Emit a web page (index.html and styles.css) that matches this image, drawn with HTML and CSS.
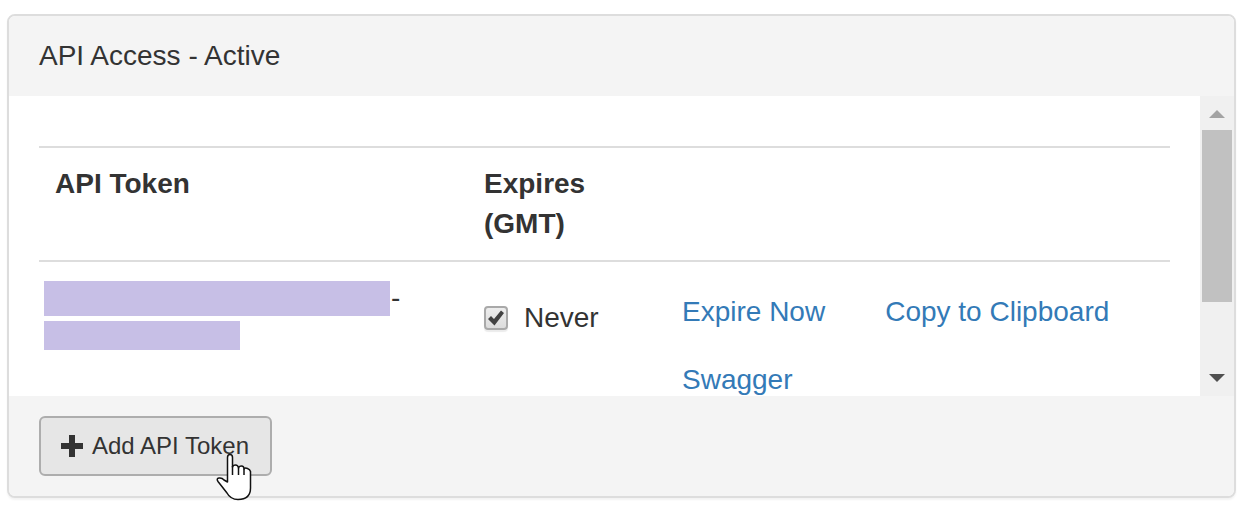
FILE: index.html
```html
<!DOCTYPE html>
<html lang="en">
<head>
<meta charset="utf-8">
<title>API Access</title>
<link rel="stylesheet" href="styles.css">
</head>
<body>
<section class="panel">
  <header class="panel-heading">API Access - Active</header>
  <div class="panel-body">
    <div class="scroll-content">
      <table class="tokens">
        <colgroup><col class="col-token"><col class="col-expires"><col></colgroup>
        <thead>
          <tr><th scope="col">API Token</th><th scope="col">Expires (GMT)</th><th></th></tr>
        </thead>
        <tbody>
          <tr>
            <td class="token">
              <div class="token-line"><span class="redacted redacted-long"></span>-</div>
              <div class="redacted redacted-short"></div>
            </td>
            <td>
              <label class="never"><input type="checkbox" class="check" checked>
                <svg class="tick" viewBox="0 0 24 24" aria-hidden="true"><path d="M4 13 7 10 10 13 17 4.500 20 7 10.500 19.500Z"/></svg>
                <span>Never</span></label>
            </td>
            <td>
              <div class="actions">
                <a href="#expire">Expire Now</a>
                <a href="#copy">Copy to Clipboard</a>
                <a href="#swagger">Swagger</a>
              </div>
            </td>
          </tr>
        </tbody>
      </table>
    </div>
    <div class="scrollbar">
      <button type="button" class="arrow arrow-up" aria-label="Scroll up"><svg viewBox="0 0 16 8"><path d="M8 0 16 8H0z"/></svg></button>
      <div class="track"><div class="thumb"></div></div>
      <button type="button" class="arrow arrow-down" aria-label="Scroll down"><svg viewBox="0 0 16 8"><path d="M0 0H16L8 8z"/></svg></button>
    </div>
  </div>
  <footer class="panel-footer">
    <button type="button" class="add">
      <svg class="plus" viewBox="0 0 22 22" aria-hidden="true"><path d="M8 0h6v8h8v6h-8v8H8v-8H0V8h8z"/></svg>
      Add API Token
      <svg class="pointer" viewBox="0 0 36 48" aria-hidden="true"><path d="M11.500 29V4.500Q11.500 1.500 14 1.500T16.500 4.500V14Q17 12 19.500 12T22.500 15Q23 13 25.500 13T28 16Q29 14.500 31.500 15.500T34.500 18.500V35Q34.500 46.500 22 46.500Q14.500 46.500 11 40L2 28.500Q0 25.500 3 25Q6 24.500 8 27Z"/><path d="M16.500 13V22M22.500 15V22M28 16V22"/></svg>
    </button>
  </footer>
</section>
</body>
</html>
```
FILE: styles.css
```css
* { box-sizing: border-box; }
body {
  margin: 0;
  padding: 14px 20px 12px 7px;
  background: #fff;
  color: #333;
  font: 28px/40px "Liberation Sans", Arial, sans-serif;
}
.panel {
  border: 2px solid #ddd;
  border-radius: 8px;
  background: #fff;
  box-shadow: 0 2px 2px rgba(0, 0, 0, .05);
}
.panel-heading {
  padding: 20px 30px;
  background: #f4f4f4;
  border-radius: 6px 6px 0 0;
}
.panel-body { display: flex; height: 300px; }
.scroll-content {
  flex: 1;
  padding: 50px 30px 0;
  overflow: hidden;
}
.tokens {
  width: 100%;
  table-layout: fixed;
  border-spacing: 0;
}
.col-token { width: 429px; }
.col-expires { width: 198px; }
.tokens th, .tokens td {
  padding: 16px;
  border-top: 2px solid #ddd;
  text-align: left;
  vertical-align: top;
}
.tokens th:nth-child(2) { padding-right: 60px; }
.tokens .token { padding: 19px 0 16px 5px; }
.token-line {
  display: flex;
  gap: 1px;
  height: 40px;
  line-height: 34px;
}
.redacted { background: #c7bfe6; }
.redacted-long { width: 346px; height: 35px; }
.redacted-short { width: 196px; height: 29px; }
.never {
  position: relative;
  display: flex;
  align-items: center;
  gap: 16px;
  padding-top: 20px;
}
.check {
  appearance: none;
  width: 24px;
  height: 24px;
  margin: 0;
  border: 2px solid #a9a9a9;
  border-radius: 4px;
  background: linear-gradient(#ededed, #dcdcdc);
  box-shadow: 0 2px 1px rgba(0, 0, 0, .08);
}
.tick {
  position: absolute;
  left: 0;
  width: 24px;
  height: 24px;
  fill: #424242;
  visibility: hidden;
}
.check:checked + .tick { visibility: visible; }
.actions {
  display: flex;
  flex-wrap: wrap;
  column-gap: 60px;
}
.actions a {
  padding: 14px 0;
  color: #337ab7;
  text-decoration: none;
}
.scrollbar {
  display: flex;
  flex-direction: column;
  width: 34px;
  background: #f0f0f0;
}
.arrow {
  display: grid;
  place-items: center;
  height: 34px;
  padding: 2px 0 0;
  border: 0;
  background: none;
}
.arrow svg { width: 16px; height: 8px; }
.arrow-up { fill: #a3a3a3; }
.arrow-down { padding: 0 0 2px; fill: #505050; }
.track { flex: 1; padding: 0 2px; }
.thumb { height: 172px; background: #c1c1c1; }
.panel-footer {
  padding: 20px 30px;
  background: #f4f4f4;
  border-radius: 0 0 6px 6px;
}
.add {
  position: relative;
  display: flex;
  align-items: center;
  gap: 9px;
  height: 60px;
  padding: 0 21px 0 20px;
  border: 2px solid #adadad;
  border-radius: 6px;
  background: #e6e6e6;
  color: #333;
  font: 24px/36px "Liberation Sans", Arial, sans-serif;
}
.plus { width: 22px; height: 22px; fill: #333; }
.pointer {
  position: absolute;
  right: 18px;
  top: 35px;
  width: 36px;
  height: 48px;
  fill: #fff;
  stroke: #111;
  stroke-width: 1.5;
  stroke-linejoin: round;
}
```
